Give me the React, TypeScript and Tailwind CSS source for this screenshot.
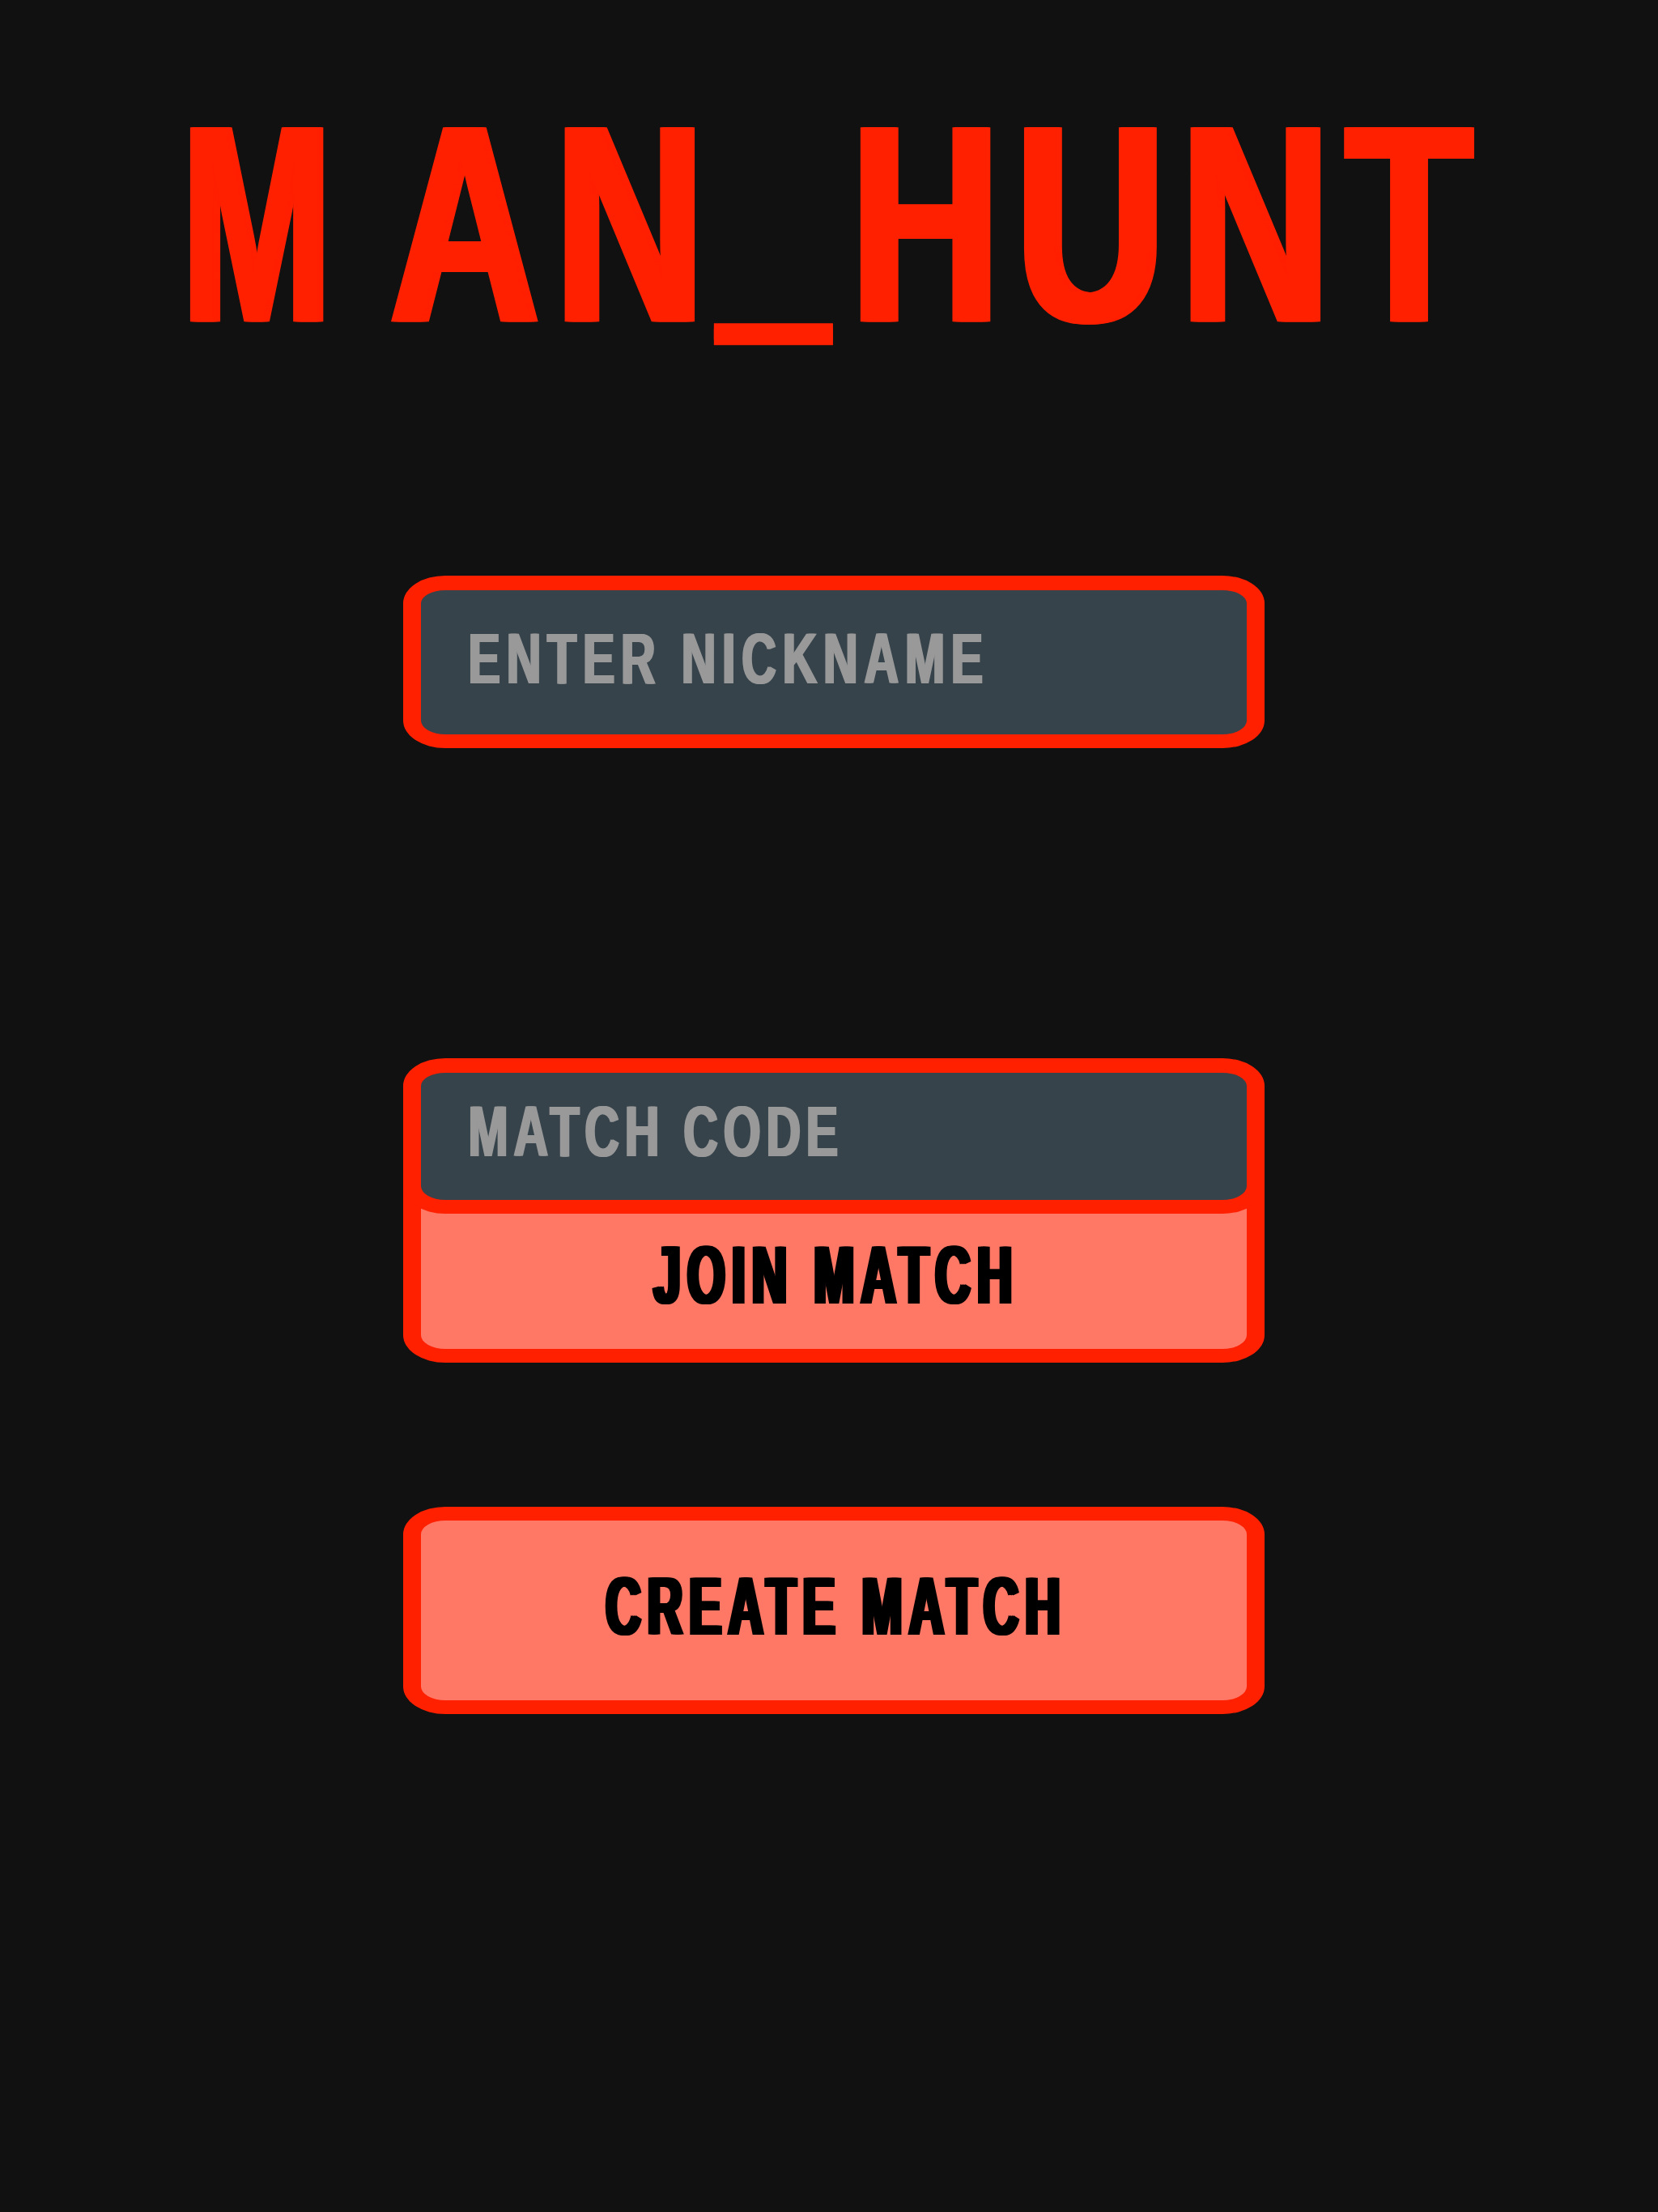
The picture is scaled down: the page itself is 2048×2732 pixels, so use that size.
import React from 'react'

// lobby screen: title, nickname field, join + create
export default function App() {
  return (
    <div className="min-h-screen bg-[#111111] pt-[148px] font-['Liberation_Sans',Arial,sans-serif] font-bold">
      <h1 className="flex justify-center">
        <span className="inline-block pl-[5px] text-[256px] leading-none tracking-[19px] text-[#ff2000] scale-y-[1.363] [text-shadow:2px_0_0_#ff2000,4px_0_0_#ff2000,6px_0_0_#ff2000,8px_0_0_#ff2000,10px_0_0_#ff2000]">
          <span className="mr-[24px] inline-block origin-left scale-x-[0.87]">M</span>
          AN
          <span className="align-[10px] leading-[0] [text-shadow:0_-5px_0_#ff2000,0_-10px_0_#ff2000]">_</span>
          HUNT
        </span>
      </h1>

      <div className="mt-[307px] flex flex-col items-center pl-[12px]">
        {/* nickname */}
        <div className="flex h-[213px] w-[1064px] items-center rounded-[52px/34px] border-x-[22px] border-t-[18px] border-b-[17px] border-[#ff2000] bg-[#36434b] pl-[57px] pb-[8px]">
          <span className="inline-block text-[59px] leading-none tracking-[7.8px] text-[#999999] scale-y-[1.5] [text-shadow:1.5px_0_0_#999999,3px_0_0_#999999]">
            ENTER NICKNAME
          </span>
        </div>

        {/* join group */}
        <div className="mt-[383px] flex flex-col">
          <div className="relative z-10 flex h-[192px] w-[1064px] items-center rounded-[52px/34px] border-x-[22px] border-t-[18px] border-b-[17px] border-[#ff2000] bg-[#36434b] pl-[57px] pb-[10px]">
            <span className="inline-block text-[59px] leading-none tracking-[6.8px] text-[#999999] scale-y-[1.5] [text-shadow:1.5px_0_0_#999999,3px_0_0_#999999]">
              MATCH CODE
            </span>
          </div>
          <button className="-mt-[40px] flex h-[224px] w-[1064px] items-center justify-center rounded-b-[52px_34px] border-x-[22px] border-t-0 border-b-[17px] border-[#ff2000] bg-[#ff7866] pt-[40px] pb-[14px]">
            <span className="inline-block text-[60px] leading-none tracking-[8.2px] text-black scale-y-[1.7] [text-shadow:2px_0_0_#000,4px_0_0_#000,6px_0_0_#000]">
              JOIN MATCH
            </span>
          </button>
        </div>

        <button className="mt-[178px] flex h-[256px] w-[1064px] items-center justify-center rounded-[52px/34px] border-x-[22px] border-y-[17px] border-[#ff2000] bg-[#ff7866] pb-[9px]">
          <span className="inline-block text-[60px] leading-none tracking-[8.2px] text-black scale-y-[1.7] [text-shadow:2px_0_0_#000,4px_0_0_#000,6px_0_0_#000]">
            CREATE MATCH
          </span>
        </button>
      </div>
    </div>
  )
}
